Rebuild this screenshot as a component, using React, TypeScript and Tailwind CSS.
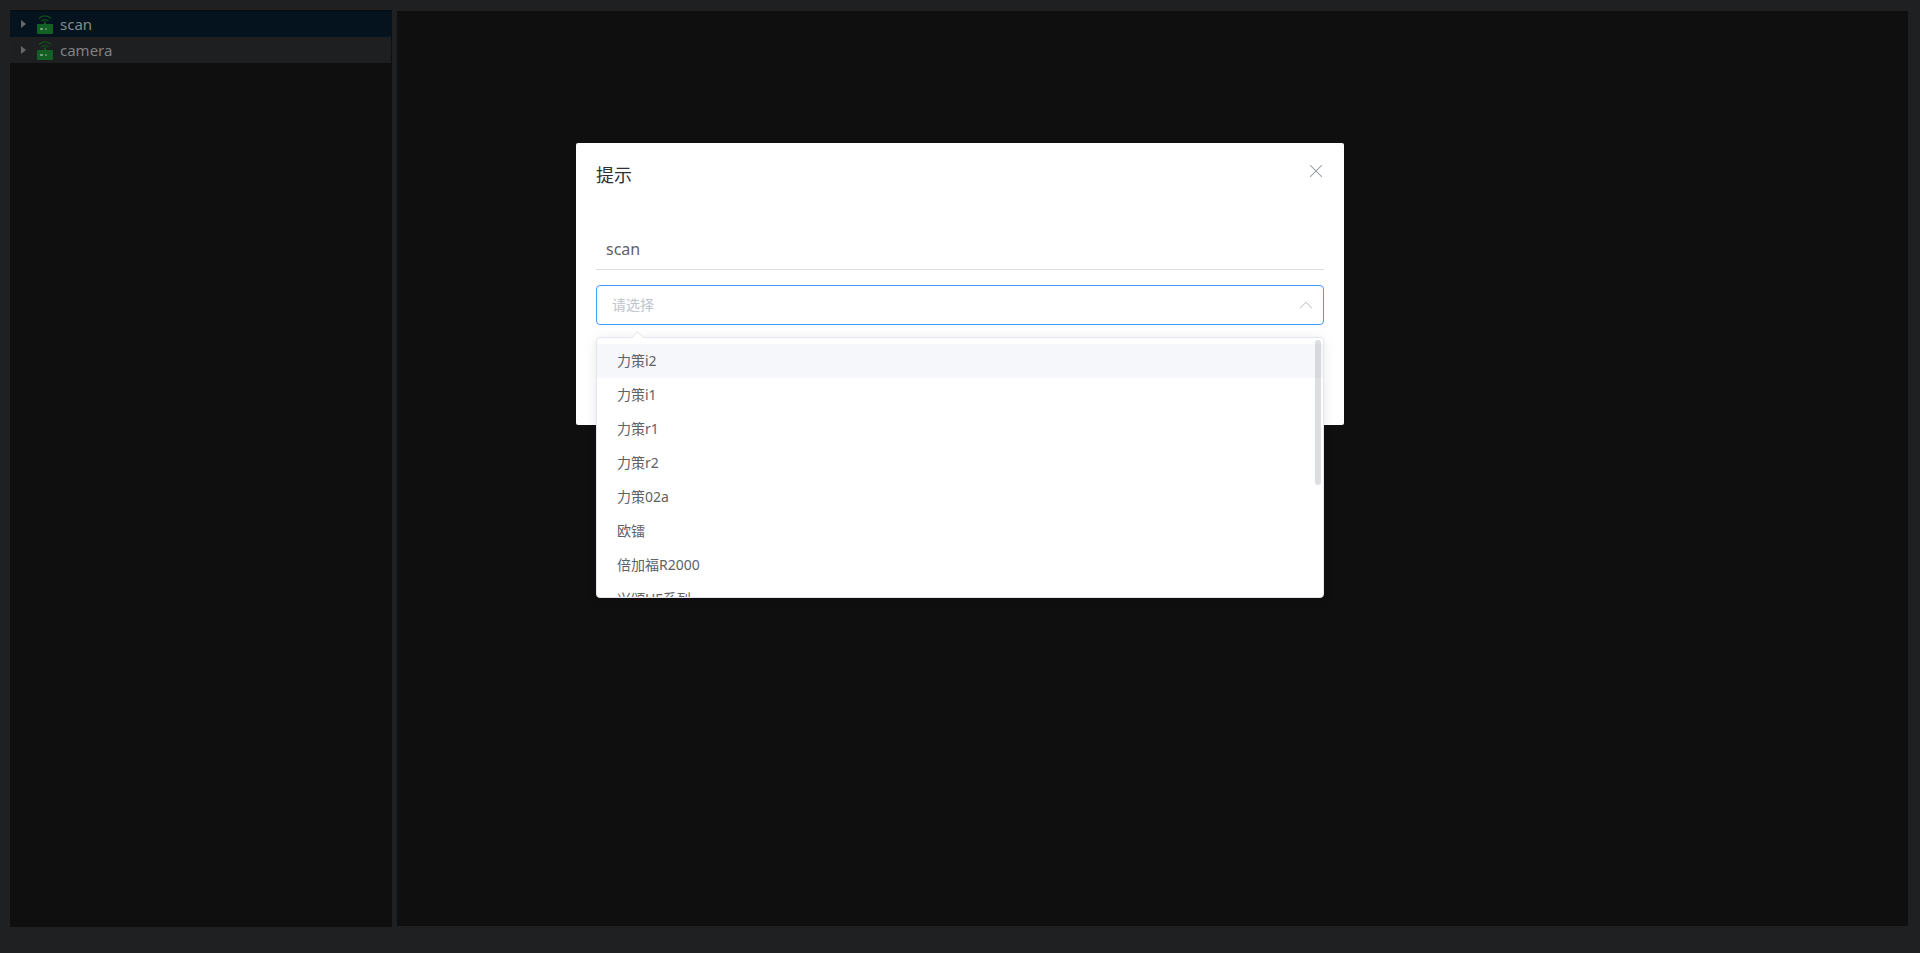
import React from 'react';
import { ChevronUp, X } from 'lucide-react';

const FONT = "font-['Noto_Sans','Noto_Sans_CJK_SC',sans-serif]";

const OPTIONS = ['力策i2', '力策i1', '力策r1', '力策r2', '力策02a', '欧镭', '倍加福R2000', '兴颂HF系列'];

function DeviceIcon() {
  return (
    <svg width="16" height="20" viewBox="0 0 16 20" className="shrink-0">
      <path d="M2 4.5 C5 1 11 1 14 4.5" fill="none" stroke="#12521c" strokeWidth="1.2" />
      <path d="M4.5 7 C6.5 5 9.5 5 11.5 7" fill="none" stroke="#12521c" strokeWidth="1.2" />
      <rect x="7" y="7.5" width="2" height="3" fill="#12521c" />
      <rect x="0" y="10" width="16" height="10" rx="1" fill="#136024" />
      <rect x="3" y="14" width="3" height="2" fill="#6f9c78" />
      <rect x="8" y="14" width="2" height="2" fill="#4c8a58" />
    </svg>
  );
}

function TreeRow({ label, active }: { label: string; active?: boolean }) {
  return (
    <div className={`mr-px flex h-[26px] items-center ${active ? 'bg-[#04131d] text-[#858b8f]' : 'bg-[#1e1f21] text-[#808285]'}`}>
      <span className="ml-[11px] mr-[11px] h-0 w-0 border-y-[4px] border-l-[5px] border-y-transparent border-l-[#66696b]" />
      <DeviceIcon />
      <span className="ml-[7px] text-[15px]">{label}</span>
    </div>
  );
}

export default function App() {
  return (
    <div className={`relative h-screen w-full overflow-hidden bg-[#1e2022] ${FONT}`}>
      <div className="flex h-full pb-[26px] pl-[10px] pr-[12px] pt-[10px]">
        <aside className="w-[382px] border-t border-[#0c0c0c] bg-[#0f0f0f]">
          <TreeRow label="scan" active />
          <TreeRow label="camera" />
        </aside>
        <main className="mb-px ml-[5px] mt-px flex-1 bg-[#0f0f0f]" />
      </div>

      <div className="absolute left-[576px] top-[143px] h-[282px] w-[768px] rounded-[2px] bg-white px-5 pt-5">
        <div className="flex items-start justify-between">
          <h2 className="text-[18px] leading-6 text-[#303133]">提示</h2>
          <X className="-mr-[3px] -mt-[3px] h-[22px] w-[22px] text-[#909399]" strokeWidth={1.1} />
        </div>
        <div className="mt-[43px] flex h-[40px] items-center border-b border-[#dcdfe6] px-[10px] pb-[2px] text-[16px] text-[#606266]">
          scan
        </div>
        <div className="mt-[15px] flex h-[40px] items-center justify-between rounded-[4px] border border-[#409eff] pl-[15px] pr-[6px] text-[14px] text-[#c0c4cc]">
          <span className="pb-[2px]">请选择</span>
          <ChevronUp className="h-[22px] w-[22px] text-[#c0c4cc]" strokeWidth={1.1} />
        </div>
      </div>

      <div className="absolute left-[596px] top-[337px] h-[261px] w-[728px] rounded-[4px] border border-[#e4e7ed] bg-white shadow-[0_2px_12px_0_rgba(0,0,0,0.1)]">
        <span className="absolute -top-[5px] left-[36px] h-[9px] w-[9px] rotate-45 border-l border-t border-[#e4e7ed] bg-white" />
        <div className="relative h-full overflow-hidden rounded-[4px]">
          <ul className="py-[6px]">
            {OPTIONS.map((option, i) => (
              <li
                key={option}
                className={`flex h-[34px] items-center px-5 pb-[2px] text-[14px] text-[#606266] ${i === 0 ? 'bg-[#f5f7fa]' : ''}`}
              >
                {option}
              </li>
            ))}
          </ul>
          <div className="absolute right-[2px] top-[2px] h-[145px] w-[6px] rounded-[3px] bg-[#909399]/30" />
        </div>
      </div>
    </div>
  );
}
